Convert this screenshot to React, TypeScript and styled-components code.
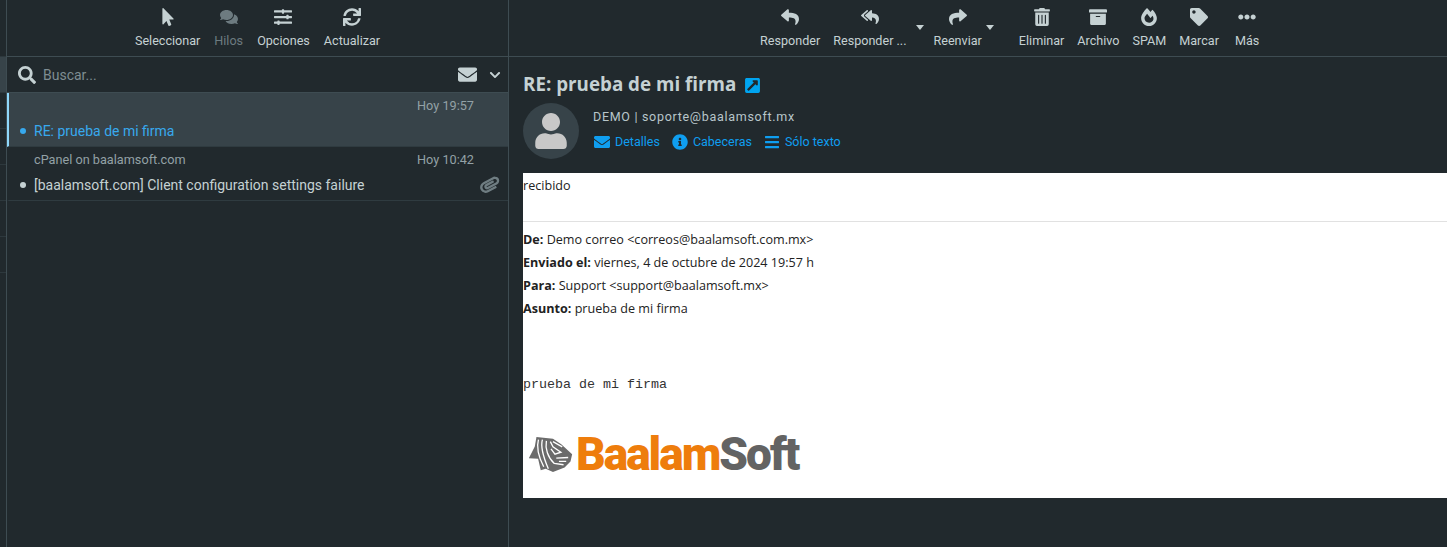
import React from "react";
import styled, { createGlobalStyle } from "styled-components";
import {
  FaMousePointer, FaComments, FaSlidersH, FaSync, FaReply, FaReplyAll, FaShare, FaTrashAlt,
  FaArchive, FaFireAlt, FaTag, FaEllipsisH, FaSearch, FaEnvelope, FaChevronDown, FaPaperclip,
  FaInfoCircle, FaBars, FaUser, FaExternalLinkSquareAlt,
} from "react-icons/fa";

const Global = createGlobalStyle`
  html, body { margin: 0; padding: 0; height: 100%; background: #21292d; overflow: hidden; }
  #root { height: 547px; }
  * { box-sizing: border-box; }
`;

const Page = styled.div`
  display: grid;
  grid-template-columns: 7px 502px 1fr;
  height: 547px;
  background: #21292d;
  color: #c5d1d3;
  font-family: Roboto, "Liberation Sans", sans-serif;
`;
const Strip = styled.div`
  border-right: 1px solid #3e4c52;
  padding-top: 56px;
  display: flex;
  flex-direction: column;
`;
const StripCell = styled.div<{ $active?: boolean }>`
  height: 36px;
  flex: none;
  border-top: 1px solid #2d383d;
  background: ${(p) => (p.$active ? "#374349" : "transparent")};
`;
const ListPanel = styled.section`
  border-right: 1px solid #3e4c52;
  display: flex;
  flex-direction: column;
  min-width: 0;
`;
const Toolbar = styled.div<{ $pad?: number; $gap: number }>`
  height: 57px;
  flex: none;
  border-bottom: 1px solid #3e4c52;
  display: flex;
  gap: ${(p) => p.$gap}px;
  justify-content: ${(p) => (p.$pad ? "flex-start" : "center")};
  padding-left: ${(p) => p.$pad ?? 0}px;
`;
const ToolButton = styled.div<{ $off?: boolean; $extra?: number }>`
  display: flex;
  flex-direction: column;
  align-items: center;
  padding-top: 8px;
  margin-right: ${(p) => p.$extra ?? 0}px;
  position: relative;
  color: ${(p) => (p.$off ? "#6d7b80" : "#c5d1d3")};
  font-size: 12.6px;
  line-height: 15px;
  white-space: nowrap;
`;
const ToolIcon = styled.div`
  height: 18px;
  margin-bottom: 7px;
  font-size: 18px;
  display: flex;
  align-items: center;
  justify-content: center;
`;
const Caret = styled.span<{ $right: number }>`
  position: absolute;
  right: ${(p) => p.$right}px;
  top: 25px;
  width: 0;
  height: 0;
  border-left: 4px solid transparent;
  border-right: 4px solid transparent;
  border-top: 5px solid #c5d1d3;
`;
const SearchRow = styled.div`
  height: 36px;
  flex: none;
  border-bottom: 1px solid #3e4c52;
  display: flex;
  align-items: center;
  padding: 0 7px 0 11px;
  font-size: 18px;
`;
const SearchText = styled.span`
  flex: 1;
  margin-left: 7px;
  font-size: 14px;
  color: #7f8d92;
`;
const MailIcon = styled.span`
  display: flex;
  font-size: 19px;
  margin-right: 12px;
`;
const ChevIcon = styled.span`
  display: flex;
  font-size: 12px;
`;
const Message = styled.div<{ $active?: boolean }>`
  height: 54px;
  flex: none;
  border-bottom: 1px solid #2f3b40;
  border-left: 2px solid ${(p) => (p.$active ? "#8fd8fb" : "transparent")};
  background: ${(p) => (p.$active ? "#374349" : "transparent")};
  padding: 4px 10px 0 25px;
  display: flex;
  flex-direction: column;
  position: relative;
`;
const MessageTop = styled.div`
  height: 18px;
  display: flex;
  justify-content: space-between;
  font-size: 12.7px;
  line-height: 18px;
  color: #93a1a6;
  padding-right: 24px;
`;
const Subject = styled.div<{ $active?: boolean }>`
  margin-top: 6px;
  font-size: 14px;
  line-height: 20px;
  color: ${(p) => (p.$active ? "#37a9ee" : "#c5d1d3")};
  position: relative;
  &::before {
    content: "";
    position: absolute;
    left: -14px;
    top: 7px;
    width: 6px;
    height: 6px;
    border-radius: 50%;
    background: ${(p) => (p.$active ? "#37a9ee" : "#c5d1d3")};
  }
`;
const Clip = styled.span`
  position: absolute;
  right: 9px;
  top: 28px;
  font-size: 19px;
  color: #6f7d82;
  display: flex;
  transform: rotate(18deg);
`;
const ReadPanel = styled.section`
  display: flex;
  flex-direction: column;
  min-width: 0;
`;
const MailHead = styled.div`
  height: 116px;
  flex: none;
  padding: 14px 0 0 14px;
`;
const Title = styled.h2`
  margin: 0;
  font-family: "Open Sans", "Liberation Sans", sans-serif;
  font-size: 18.8px;
  line-height: 26px;
  font-weight: 700;
  color: #c5d1d3;
  display: flex;
  align-items: center;
  gap: 8px;
`;
const TitleLink = styled.span`
  display: flex;
  color: #00a4f0;
  font-size: 17px;
  margin-top: 2px;
`;
const HeadRow = styled.div`
  margin-top: 6px;
  display: flex;
  gap: 14px;
`;
const Avatar = styled.div`
  width: 56px;
  height: 56px;
  border-radius: 50%;
  background: #374349;
  color: #c8c8c8;
  display: flex;
  align-items: center;
  justify-content: center;
  font-size: 36px;
`;
const Sender = styled.div`
  font-size: 12.5px;
  line-height: 16px;
  margin-top: 6px;
  letter-spacing: 0.7px;
  color: #b8c6ca;
`;
const Links = styled.div`
  display: flex;
  gap: 12px;
  margin: 8px 0 0 1px;
`;
const HeadLink = styled.span`
  display: flex;
  align-items: center;
  gap: 5px;
  font-size: 12.5px;
  line-height: 18px;
  color: #0f9ef0;
`;
const LinkIcon = styled.span`
  display: flex;
  font-size: 16px;
`;
const Body = styled.div`
  height: 325px;
  margin-left: 14px;
  flex: none;
  background: #fff;
  color: #222;
  font-family: "Open Sans", "Liberation Sans", sans-serif;
  font-size: 12.6px;
`;
const Plain = styled.div`
  line-height: 26px;
  height: 48px;
`;
const Rule = styled.hr`
  margin: 0 0 6px;
  border: 0;
  border-top: 1px solid #e1e1e1;
`;
const MetaLine = styled.div`
  line-height: 23px;
  height: 23px;
  white-space: nowrap;
  b { font-weight: 700; }
`;
const Mono = styled.div`
  margin-top: 57px;
  font-family: "Liberation Mono", monospace;
  font-size: 13.33px;
  line-height: 16px;
  color: #333;
`;
const Logo = styled.div`
  margin: 39px 0 0 5px;
  display: flex;
  align-items: center;
  gap: 3px;
  height: 44px;
`;
const LogoWord = styled.div`
  font-family: Roboto, "Open Sans", sans-serif;
  font-weight: 900;
  font-size: 46px;
  line-height: 44px;
  letter-spacing: -2px;
  color: #ee7d0c;
  span { color: #636363; }
`;

const Tool = ({ icon, label, off, caret, extra }: { icon: React.ReactNode; label: string; off?: boolean; caret?: number; extra?: number }) => (
  <ToolButton $off={off} $extra={extra}>
    <ToolIcon>{icon}</ToolIcon>
    {label}
    {caret !== undefined && <Caret $right={caret} />}
  </ToolButton>
);

const Tiger = () => (
  <svg width="45" height="38" viewBox="25 20 135 115" fill="none">
    <path d="M50 26 L100 31 L125 48 L158 78 L153 100 L135 118 L100 132 L78 122 L63 127 L55 92 L27 90 L45 55 Z" fill="#6b6b6b" />
    <path d="M56 34 C50 55 56 85 72 116 M68 34 C62 55 70 85 86 122 M80 38 C76 60 84 88 104 106 L132 110 M92 40 L100 56 L124 72 L106 78 L94 62 M110 90 L146 88 M118 100 L140 100 M100 40 L128 56" stroke="#fff" strokeWidth="4" />
  </svg>
);

export default function App() {
  return (
    <Page>
      <Global />
      <Strip>
        <StripCell $active />
        <StripCell />
        <StripCell />
        <StripCell />
        <StripCell />
        <StripCell />
        <StripCell />
      </Strip>
      <ListPanel>
        <Toolbar $gap={14}>
          <Tool icon={<FaMousePointer />} label="Seleccionar" />
          <Tool icon={<FaComments />} label="Hilos" off />
          <Tool icon={<FaSlidersH />} label="Opciones" />
          <Tool icon={<FaSync />} label="Actualizar" />
        </Toolbar>
        <SearchRow>
          <FaSearch />
          <SearchText>Buscar...</SearchText>
          <MailIcon><FaEnvelope /></MailIcon>
          <ChevIcon><FaChevronDown /></ChevIcon>
        </SearchRow>
        <Message $active>
          <MessageTop><span />Hoy 19:57</MessageTop>
          <Subject $active>RE: prueba de mi firma</Subject>
        </Message>
        <Message>
          <MessageTop>cPanel on baalamsoft.com<span>Hoy 10:42</span></MessageTop>
          <Subject>[baalamsoft.com] Client configuration settings failure</Subject>
          <Clip><FaPaperclip /></Clip>
        </Message>
      </ListPanel>
      <ReadPanel>
        <Toolbar $pad={251} $gap={13}>
          <Tool icon={<FaReply />} label="Responder" />
          <Tool icon={<FaReplyAll />} label="Responder ..." caret={-18} extra={14} />
          <Tool icon={<FaShare />} label="Reenviar" caret={-12} extra={24} />
          <Tool icon={<FaTrashAlt />} label="Eliminar" />
          <Tool icon={<FaArchive />} label="Archivo" />
          <Tool icon={<FaFireAlt />} label="SPAM" />
          <Tool icon={<FaTag />} label="Marcar" extra={3} />
          <Tool icon={<FaEllipsisH />} label="Más" />
        </Toolbar>
        <MailHead>
          <Title>RE: prueba de mi firma <TitleLink><FaExternalLinkSquareAlt /></TitleLink></Title>
          <HeadRow>
            <Avatar><FaUser /></Avatar>
            <div>
              <Sender>DEMO | soporte@baalamsoft.mx</Sender>
              <Links>
                <HeadLink><LinkIcon><FaEnvelope /></LinkIcon>Detalles</HeadLink>
                <HeadLink><LinkIcon><FaInfoCircle /></LinkIcon>Cabeceras</HeadLink>
                <HeadLink><LinkIcon><FaBars /></LinkIcon>Sólo texto</HeadLink>
              </Links>
            </div>
          </HeadRow>
        </MailHead>
        <Body>
          <Plain>recibido</Plain>
          <Rule />
          <MetaLine><b>De:</b> Demo correo &lt;correos@baalamsoft.com.mx&gt;</MetaLine>
          <MetaLine><b>Enviado el:</b> viernes, 4 de octubre de 2024 19:57 h</MetaLine>
          <MetaLine><b>Para:</b> Support &lt;support@baalamsoft.mx&gt;</MetaLine>
          <MetaLine><b>Asunto:</b> prueba de mi firma</MetaLine>
          <Mono>prueba de mi firma</Mono>
          <Logo>
            <Tiger />
            <LogoWord>Baalam<span>Soft</span></LogoWord>
          </Logo>
        </Body>
      </ReadPanel>
    </Page>
  );
}
